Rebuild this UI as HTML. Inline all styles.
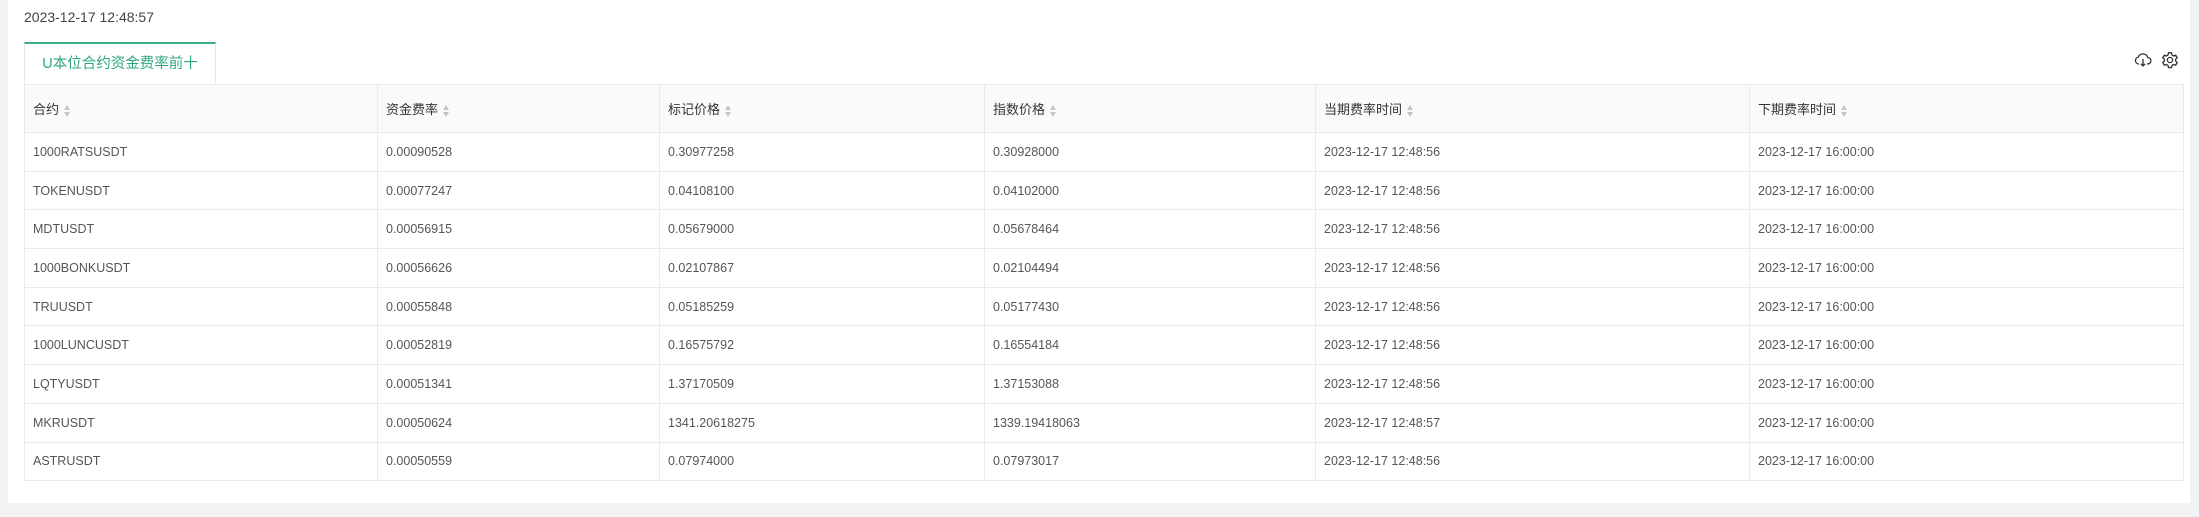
<!DOCTYPE html>
<html><head><meta charset="utf-8"><style>
*{box-sizing:border-box;margin:0;padding:0}
body{width:2199px;height:517px;background:#f2f3f5;font-family:"Liberation Sans","Noto Sans CJK SC",sans-serif;color:#333;overflow:hidden;position:relative}
.card{position:absolute;left:8px;top:0;width:2182px;height:503px;background:#fff}
.date{position:absolute;left:24px;top:9px;font-size:14px;color:#444}
.tab{position:absolute;left:24px;top:42px;width:192px;height:43px;border:1px solid #e8e8e8;border-top:2px solid #3daf84;border-bottom:none;color:#2ea87a;font-size:14.5px;text-align:center;line-height:40px;background:#fff}
table{position:absolute;left:24px;top:84px;border-collapse:collapse;font-size:12.5px;table-layout:fixed}
td,th{border:1px solid #ebebeb;padding:0 8px;text-align:left;white-space:nowrap}
th{height:48px;background:#fafafa;font-weight:normal;color:#333;font-size:13px}
td{height:38.7px;color:#555}
.s{display:inline-block;vertical-align:middle;margin-left:5px;width:7px;height:12px;position:relative}
.s:before,.s:after{content:"";position:absolute;left:0;border-left:3.5px solid transparent;border-right:3.5px solid transparent}
.s:before{top:0;border-bottom:5px solid #c4c4c4}
.s:after{bottom:0;border-top:5px solid #c4c4c4}
.ic{position:absolute;top:51px}
</style></head><body>
<div class="card"></div>
<div class="date">2023-12-17 12:48:57</div>
<div class="tab">U本位合约资金费率前十</div>
<svg class="ic" style="left:2134px" width="18" height="18" viewBox="0 0 18 18" fill="none" stroke="#333" stroke-width="1.3"><path d="M5 13H4.5A3.5 3.5 0 0 1 4.3 6.1 5 5 0 0 1 13.8 6.5 3.2 3.2 0 0 1 13.5 13H13"/><path d="M9 8v7M6.8 12.8 9 15l2.2-2.2"/></svg>
<svg class="ic" style="left:2161px" width="18" height="18" viewBox="0 0 18 18" fill="none" stroke="#333" stroke-width="1.3"><path d="M7.5 1.8h3l.5 2.2 1.6.9 2.1-.7 1.5 2.6-1.6 1.5v1.8l1.6 1.5-1.5 2.6-2.1-.7-1.6.9-.5 2.2h-3l-.5-2.2-1.6-.9-2.1.7-1.5-2.6 1.6-1.5V8.3L1.8 6.8l1.5-2.6 2.1.7L7 4z"/><circle cx="9" cy="9" r="2.6"/></svg>
<table>
<colgroup><col style="width:353px"><col style="width:282px"><col style="width:325px"><col style="width:331px"><col style="width:434px"><col style="width:434px"></colgroup>
<tr><th>合约<span class="s"></span></th><th>资金费率<span class="s"></span></th><th>标记价格<span class="s"></span></th><th>指数价格<span class="s"></span></th><th>当期费率时间<span class="s"></span></th><th>下期费率时间<span class="s"></span></th></tr>
<tr><td>1000RATSUSDT</td><td>0.00090528</td><td>0.30977258</td><td>0.30928000</td><td>2023-12-17 12:48:56</td><td>2023-12-17 16:00:00</td></tr>
<tr><td>TOKENUSDT</td><td>0.00077247</td><td>0.04108100</td><td>0.04102000</td><td>2023-12-17 12:48:56</td><td>2023-12-17 16:00:00</td></tr>
<tr><td>MDTUSDT</td><td>0.00056915</td><td>0.05679000</td><td>0.05678464</td><td>2023-12-17 12:48:56</td><td>2023-12-17 16:00:00</td></tr>
<tr><td>1000BONKUSDT</td><td>0.00056626</td><td>0.02107867</td><td>0.02104494</td><td>2023-12-17 12:48:56</td><td>2023-12-17 16:00:00</td></tr>
<tr><td>TRUUSDT</td><td>0.00055848</td><td>0.05185259</td><td>0.05177430</td><td>2023-12-17 12:48:56</td><td>2023-12-17 16:00:00</td></tr>
<tr><td>1000LUNCUSDT</td><td>0.00052819</td><td>0.16575792</td><td>0.16554184</td><td>2023-12-17 12:48:56</td><td>2023-12-17 16:00:00</td></tr>
<tr><td>LQTYUSDT</td><td>0.00051341</td><td>1.37170509</td><td>1.37153088</td><td>2023-12-17 12:48:56</td><td>2023-12-17 16:00:00</td></tr>
<tr><td>MKRUSDT</td><td>0.00050624</td><td>1341.20618275</td><td>1339.19418063</td><td>2023-12-17 12:48:57</td><td>2023-12-17 16:00:00</td></tr>
<tr><td>ASTRUSDT</td><td>0.00050559</td><td>0.07974000</td><td>0.07973017</td><td>2023-12-17 12:48:56</td><td>2023-12-17 16:00:00</td></tr>
</table>
</body></html>
